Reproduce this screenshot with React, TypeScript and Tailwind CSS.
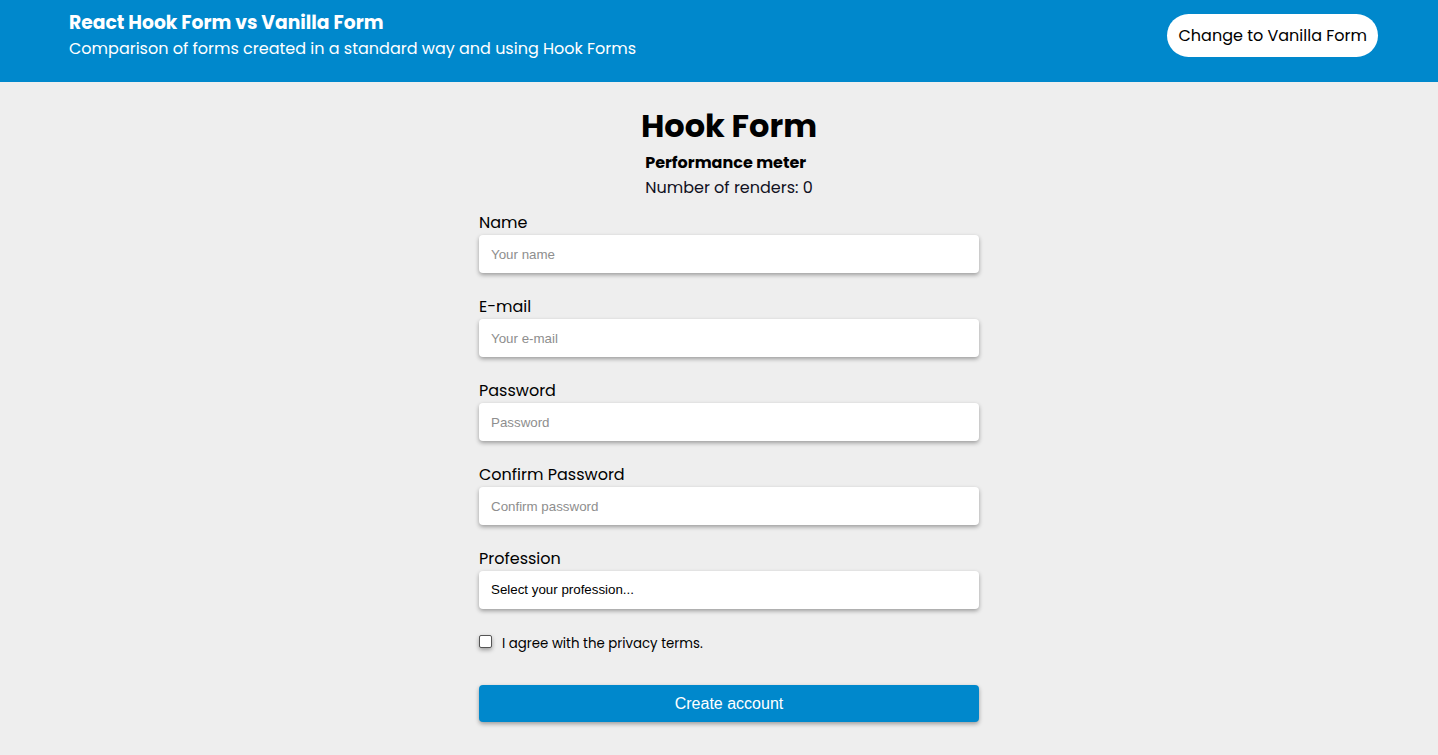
import React from "react";

const poppins = "font-['Poppins','Open_Sans',sans-serif]";

function Field({ label, placeholder, type = "text" }: { label: string; placeholder: string; type?: string }) {
  return (
    <div className="flex flex-col mb-[21px]">
      <label className="text-[16px] leading-[24px] text-black pt-[1px]">{label}</label>
      <input
        type={type}
        placeholder={placeholder}
        className="h-[38px] w-full rounded-[4px] bg-white px-[12px] text-[13.33px] font-['Liberation_Sans',Arial,sans-serif] text-black placeholder:text-[#8e8e8e] shadow-[0_2px_4px_rgba(0,0,0,0.35)] outline-none"
      />
    </div>
  );
}

export default function App() {
  return (
    <div className={`min-h-[755px] bg-[#eeeeee] ${poppins}`}>
      <header className="h-[82px] bg-[#0088cc] flex items-start justify-between pl-[69px] pr-[60px]">
        <div className="flex flex-col text-white pt-[9px]">
          <h1 className="text-[18.72px] font-bold leading-[26px] mt-[1px]">React Hook Form vs Vanilla Form</h1>
          <p className="text-[16px] leading-[24px] mt-[1px]">Comparison of forms created in a standard way and using Hook Forms</p>
        </div>
        <button className="mt-[14px] h-[43px] rounded-full bg-white px-[11px] text-[16px] text-black">
          Change to Vanilla Form
        </button>
      </header>
      <main className="flex flex-col items-center pt-[20px] pl-[20px]">
        <div className="flex flex-col items-center">
          <h2 className="text-[32px] font-bold leading-[48px] text-black">Hook Form</h2>
          <div className="flex flex-col items-start mt-[1px]">
            <p className="text-[16px] font-bold leading-[24px] text-black">Performance meter</p>
            <p className="text-[16px] leading-[24px] text-[#111122] mt-[1px]">Number of renders: 0</p>
          </div>
        </div>
        <form className="w-[500px] mt-[10px] flex flex-col" onSubmit={(e) => e.preventDefault()}>
          <Field label="Name" placeholder="Your name" />
          <Field label="E-mail" placeholder="Your e-mail" type="email" />
          <Field label="Password" placeholder="Password" type="password" />
          <Field label="Confirm Password" placeholder="Confirm password" type="password" />
          <div className="flex flex-col">
            <label className="text-[16px] leading-[24px] text-black pt-[1px]">Profession</label>
            <div className="h-[38px] w-full rounded-[4px] bg-white px-[12px] flex items-center text-[13.33px] font-['Liberation_Sans',Arial,sans-serif] text-black shadow-[0_2px_4px_rgba(0,0,0,0.35)]">
              Select your profession...
            </div>
          </div>
          <label className="flex items-center mt-[22px] h-[20px] text-[13.33px] text-black">
            <span className="w-[13px] h-[13px] border border-[#555] rounded-[2px] bg-white shadow-[0_2px_4px_rgba(0,0,0,0.35)]" />
            <span className="ml-[10px] leading-[20px] mt-[5px]">I agree with the privacy terms.</span>
          </label>
          <button
            type="submit"
            className="mt-[34px] h-[37px] w-full rounded-[4px] bg-[#0088cc] text-white text-[16px] font-['Liberation_Sans',Arial,sans-serif] shadow-[0_2px_4px_rgba(0,0,0,0.35)]"
          >
            Create account
          </button>
        </form>
      </main>
    </div>
  );
}
